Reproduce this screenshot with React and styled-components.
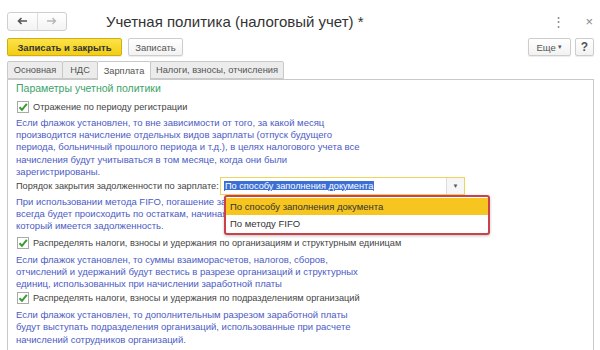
import React from "react";
import styled, { createGlobalStyle } from "styled-components";

const GlobalStyle = createGlobalStyle`
  html, body { margin: 0; padding: 0; background: #fff; }
  body { font-family: "Liberation Sans", Arial, sans-serif; color: #444; }
`;

const Window = styled.div`
  width: 600px;
  height: 350px;
  overflow: hidden;
  background: #fff;
  display: flex;
  flex-direction: column;
`;

const TitleBar = styled.div`
  display: flex;
  align-items: center;
  height: 20px;
  margin-top: 11px;
  padding: 0 7px 0 7px;
`;

const NavGroup = styled.div`
  display: flex;
  width: 60px;
  height: 19px;
  border: 1px solid #cfcfcf;
  border-radius: 3px;
  box-sizing: border-box;
  background: linear-gradient(#fff, #f3f3f3);
`;

const NavButton = styled.div`
  flex: 1;
  display: flex;
  align-items: center;
  justify-content: center;
  color: ${(p) => (p.$disabled ? "#b5b5b5" : "#555")};
  & + & { border-left: 1px solid #dcdcdc; }
`;

const Title = styled.div`
  margin-left: 39px;
  font-size: 15px;
  color: #333;
  white-space: nowrap;
`;

const Spacer = styled.div`
  flex: 1;
`;

const WinIcon = styled.div`
  color: #888;
  font-size: ${(p) => p.$size || 13}px;
  margin-left: ${(p) => p.$ml || 0}px;
  line-height: 1;
`;

const Toolbar = styled.div`
  display: flex;
  align-items: center;
  gap: 6px;
  margin-top: 7px;
  padding: 0 6px 0 7px;
  height: 18px;
`;

const Button = styled.div`
  height: 18px;
  box-sizing: border-box;
  display: flex;
  align-items: center;
  justify-content: center;
  width: ${(p) => p.$w}px;
  margin-left: ${(p) => p.$ml ?? 0}px;
  font-size: ${(p) => p.$fs || 9.5}px;
  border-radius: 2px;
  white-space: nowrap;
  border: 1px solid ${(p) => (p.$primary ? "#d2ae0c" : "#cdcdcd")};
  background: ${(p) => (p.$primary ? "linear-gradient(#fbe34a, #f2cd14)" : "linear-gradient(#fff, #f2f2f2)")};
  color: ${(p) => (p.$primary ? "#333" : "#555")};
  font-weight: ${(p) => (p.$bold ? "bold" : "normal")};
  box-shadow: 0 1px 1px rgba(0,0,0,0.08);
`;

const Tabs = styled.div`
  display: flex;
  margin-top: 5px;
  padding-left: 7px;
  height: 18px;
  position: relative;
  z-index: 1;
`;

const Tab = styled.div`
  height: ${(p) => (p.$active ? 19 : 18)}px;
  width: ${(p) => p.$w}px;
  box-sizing: border-box;
  display: flex;
  align-items: center;
  justify-content: center;
  font-size: 9.3px;
  color: #555;
  white-space: nowrap;
  border: 1px solid #c9c9c9;
  border-bottom: ${(p) => (p.$active ? "none" : "1px solid #c9c9c9")};
  border-radius: 2px 2px 0 0;
  background: ${(p) => (p.$active ? "#fff" : "#ececec")};
  & + & { margin-left: -1px; }
`;

const Panel = styled.div`
  flex: 1;
  margin: 0 6px 0 7px;
  border: 1px solid #c9c9c9;
  border-bottom: none;
  padding: 1px 8px 0 8px;
  position: relative;
`;

const GroupTitle = styled.div`
  color: #3ca36a;
  font-size: 10.5px;
  height: 14px;
  line-height: 14px;
`;

const CheckRow = styled.div`
  display: flex;
  align-items: center;
  gap: 4px;
  height: 14px;
  margin-top: ${(p) => p.$mt || 0}px;
  padding-left: 1px;
  font-size: 9.2px;
  color: #444;
  white-space: nowrap;
`;

const Box = styled.div`
  width: 10px;
  height: 10px;
  border: 1px solid #a9a9a9;
  background: #fff;
  display: flex;
  align-items: center;
  justify-content: center;
`;

const Hint = styled.div`
  color: #4b5bc4;
  font-size: 9.5px;
  line-height: 12.2px;
  margin-top: ${(p) => p.$mt || 0}px;
  white-space: nowrap;
`;

const FieldRow = styled.div`
  display: flex;
  align-items: center;
  margin-top: ${(p) => p.$mt || 0}px;
  height: 18px;
  font-size: 9.2px;
  color: #444;
  position: relative;
`;

const FieldLabel = styled.div`
  width: 204px;
  white-space: nowrap;
`;

const Select = styled.div`
  width: 245px;
  height: 18px;
  box-sizing: border-box;
  border: 1px solid #f0d45a;
  display: flex;
  align-items: center;
  padding-left: 3px;
  background: #fff;
`;

const Selected = styled.span`
  background: #3b6fd4;
  color: #fff;
  text-decoration: underline;
  padding: 0 1px;
  white-space: nowrap;
`;

const SelectBtn = styled.div`
  margin-left: auto;
  width: 17px;
  height: 16px;
  border-left: 1px solid #ddd;
  display: flex;
  align-items: center;
  justify-content: center;
  font-size: 6px;
  color: #555;
  background: #f6f6f6;
`;

const DropDown = styled.div`
  position: absolute;
  left: 208px;
  top: 18px;
  width: 266px;
  box-sizing: border-box;
  border: 2px solid #c9414a;
  border-radius: 3px;
  background: #fff;
  padding: 1px 0;
  box-shadow: 0 1px 3px rgba(0,0,0,0.25);
  z-index: 2;
`;

const Option = styled.div`
  height: 17px;
  display: flex;
  align-items: center;
  padding-left: 4px;
  font-size: 9.5px;
  color: #333;
  background: ${(p) => (p.$active ? "#f6c51f" : "#fff")};
`;

const Check = () => (
  <Box>
    <svg width="10" height="10" viewBox="0 0 10 10">
      <path d="M1.5 5.2 L4 7.8 L8.8 1.8" fill="none" stroke="#3a9a34" strokeWidth="2" />
    </svg>
  </Box>
);

const Arrow = ({ dir }) => (
  <svg width="11" height="8" viewBox="0 0 11 8">
    {dir === "left" ? (
      <path d="M10 4 H2 M4.5 1 L1.5 4 L4.5 7" fill="none" stroke="currentColor" strokeWidth="1.6" />
    ) : (
      <path d="M1 4 H9 M6.5 1 L9.5 4 L6.5 7" fill="none" stroke="currentColor" strokeWidth="1.3" />
    )}
  </svg>
);

export default function App() {
  return (
    <>
      <GlobalStyle />
      <Window>
        <TitleBar>
          <NavGroup>
            <NavButton><Arrow dir="left" /></NavButton>
            <NavButton $disabled><Arrow dir="right" /></NavButton>
          </NavGroup>
          <Title>Учетная политика (налоговый учет) *</Title>
          <Spacer />
          <WinIcon $size={13}>⋮</WinIcon>
          <WinIcon $size={13} $ml={20}>×</WinIcon>
        </TitleBar>
        <Toolbar>
          <Button $primary $bold $w={115}>Записать и закрыть</Button>
          <Button $w={55}>Записать</Button>
          <Spacer />
          <Button $w={43}>Еще&nbsp;<span style={{ fontSize: 7 }}>▾</span></Button>
          <Button $w={19} $ml={-2} $fs={12} $bold>?</Button>
        </Toolbar>
        <Tabs>
          <Tab $w={56}>Основная</Tab>
          <Tab $w={36}>НДС</Tab>
          <Tab $active $w={54}>Зарплата</Tab>
          <Tab $w={134}>Налоги, взносы, отчисления</Tab>
        </Tabs>
        <Panel>
          <GroupTitle>Параметры учетной политики</GroupTitle>
          <CheckRow $mt={5}>
            <Check />
            Отражение по периоду регистрации
          </CheckRow>
          <Hint $mt={3}>
            Если флажок установлен, то вне зависимости от того, за какой месяц<br />
            производится начисление отдельных видов зарплаты (отпуск будущего<br />
            периода, больничный прошлого периода и т.д.), в целях налогового учета все<br />
            начисления будут учитываться в том месяце, когда они были<br />
            зарегистрированы.
          </Hint>
          <FieldRow $mt={-1}>
            <FieldLabel>Порядок закрытия задолженности по зарплате:</FieldLabel>
            <Select>
              <Selected>По способу заполнения документа</Selected>
              <SelectBtn>▼</SelectBtn>
            </Select>
            <DropDown>
              <Option $active>По способу заполнения документа</Option>
              <Option>По методу FIFO</Option>
            </DropDown>
          </FieldRow>
          <Hint $mt={1}>
            При использовании метода FIFO, погашение задолженности по зарплате<br />
            всегда будет происходить по остаткам, начиная с самого раннего месяца, в<br />
            который имеется задолженность.
          </Hint>
          <CheckRow $mt={3}>
            <Check />
            Распределять налоги, взносы и удержания по организациям и структурным единицам
          </CheckRow>
          <Hint $mt={4}>
            Если флажок установлен, то суммы взаиморасчетов, налогов, сборов,<br />
            отчислений и удержаний будут вестись в разрезе организаций и структурных<br />
            единиц, использованных при начислении заработной платы
          </Hint>
          <CheckRow $mt={1}>
            <Check />
            Распределять налоги, взносы и удержания по подразделениям организаций
          </CheckRow>
          <Hint $mt={4}>
            Если флажок установлен, то дополнительным разрезом заработной платы<br />
            будут выступать подразделения организаций, использованные при расчете<br />
            начислений сотрудников организаций.
          </Hint>
        </Panel>
      </Window>
    </>
  );
}
